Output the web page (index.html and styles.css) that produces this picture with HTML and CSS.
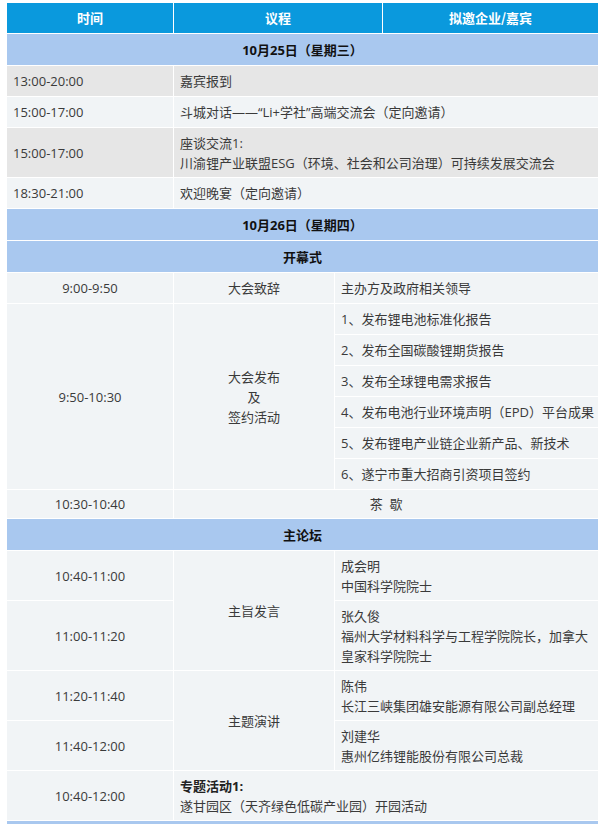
FILE: index.html
```html
<!DOCTYPE html>
<html lang="zh-CN">
<head>
<meta charset="utf-8">
<title>议程</title>
<link rel="stylesheet" href="styles.css">
</head>
<body>
<div class="wrap">
<table class="agenda">
  <colgroup>
    <col class="c1"><col class="c2"><col class="c3"><col class="c4">
  </colgroup>
  <thead>
    <tr class="head">
      <th>时间</th>
      <th colspan="2">议程</th>
      <th>拟邀企业/嘉宾</th>
    </tr>
  </thead>
  <tbody>
    <tr class="band"><td colspan="4">10月25日（星期三）</td></tr>
    <tr class="gray"><td>13:00-20:00</td><td colspan="3">嘉宾报到</td></tr>
    <tr class="light"><td>15:00-17:00</td><td colspan="3">斗城对话——“Li+学社”高端交流会（定向邀请）</td></tr>
    <tr class="gray multi"><td>15:00-17:00</td><td colspan="3">座谈交流1:<br>川渝锂产业联盟ESG（环境、社会和公司治理）可持续发展交流会</td></tr>
    <tr class="light"><td>18:30-21:00</td><td colspan="3">欢迎晚宴（定向邀请）</td></tr>

    <tr class="band"><td colspan="4">10月26日（星期四）</td></tr>
    <tr class="band"><td colspan="4">开幕式</td></tr>
    <tr class="light"><td class="ctr">9:00-9:50</td><td class="ctr">大会致辞</td><td class="guest" colspan="2">主办方及政府相关领导</td></tr>
    <tr class="light"><td class="ctr" rowspan="6">9:50-10:30</td><td class="ctr" rowspan="6">大会发布<br>及<br>签约活动</td><td class="guest" colspan="2">1、发布锂电池标准化报告</td></tr>
    <tr class="light"><td class="guest" colspan="2">2、发布全国碳酸锂期货报告</td></tr>
    <tr class="light"><td class="guest" colspan="2">3、发布全球锂电需求报告</td></tr>
    <tr class="light"><td class="guest nowrap" colspan="2">4、发布电池行业环境声明（EPD）平台成果</td></tr>
    <tr class="light"><td class="guest" colspan="2">5、发布锂电产业链企业新产品、新技术</td></tr>
    <tr class="light"><td class="guest" colspan="2">6、遂宁市重大招商引资项目签约</td></tr>
    <tr class="light short"><td class="ctr">10:30-10:40</td><td class="ctr" colspan="3">茶&nbsp;&nbsp;歇</td></tr>

    <tr class="band"><td colspan="4">主论坛</td></tr>
    <tr class="light multi"><td class="ctr">10:40-11:00</td><td class="ctr" rowspan="2">主旨发言</td><td class="guest" colspan="2">成会明<br>中国科学院院士</td></tr>
    <tr class="light multi"><td class="ctr">11:00-11:20</td><td class="guest" colspan="2">张久俊<br>福州大学材料科学与工程学院院长，加拿大<br>皇家科学院院士</td></tr>
    <tr class="light multi"><td class="ctr">11:20-11:40</td><td class="ctr" rowspan="2">主题演讲</td><td class="guest" colspan="2">陈伟<br>长江三峡集团雄安能源有限公司副总经理</td></tr>
    <tr class="light multi"><td class="ctr">11:40-12:00</td><td class="guest" colspan="2">刘建华<br>惠州亿纬锂能股份有限公司总裁</td></tr>
    <tr class="light multi"><td class="ctr">10:40-12:00</td><td colspan="3"><strong>专题活动1:</strong><br>遂甘园区（天齐绿色低碳产业园）开园活动</td></tr>
    <tr class="band"><td colspan="4">&nbsp;</td></tr>
  </tbody>
</table>
</div>
</body>
</html>
```

FILE: styles.css
```css
html, body {
  margin: 0;
  padding: 0;
  background: #ffffff;
}

.wrap {
  padding: 2px 2px 0 6px;
}

.agenda {
  width: 593px;
  table-layout: fixed;
  border-collapse: separate;
  border-spacing: 1px;
  font-family: "Open Sans", "Noto Sans CJK SC", sans-serif;
  font-size: 13px;
  line-height: 20px;
  color: #3a3a3a;
}

.c1 { width: 166px; }
.c2 { width: 160px; }
.c3 { width: 47px; }
.c4 { width: 215px; }

.agenda th,
.agenda td {
  padding: 5px 6px;
  vertical-align: middle;
  text-align: left;
}

.head th {
  background: #0a99dd;
  color: #ffffff;
  font-weight: bold;
  text-align: center;
  font-family: "Noto Sans CJK SC", sans-serif;
}

.band td {
  background: #a9c8ef;
  color: #111111;
  font-weight: bold;
  text-align: center;
  padding-top: 6px;
  padding-bottom: 5px;
}

.gray td {
  background: #e6e6e6;
}

.light td {
  background: #f1f4f6;
}

.short td {
  padding-top: 4px;
  padding-bottom: 4px;
}

.multi td {
  padding-bottom: 4px;
}

.agenda td.ctr {
  text-align: center;
}

.agenda td.guest {
  padding-right: 2px;
}

.agenda td.nowrap {
  white-space: nowrap;
  overflow: hidden;
}

.agenda strong {
  font-weight: bold;
  color: #222222;
}
```
